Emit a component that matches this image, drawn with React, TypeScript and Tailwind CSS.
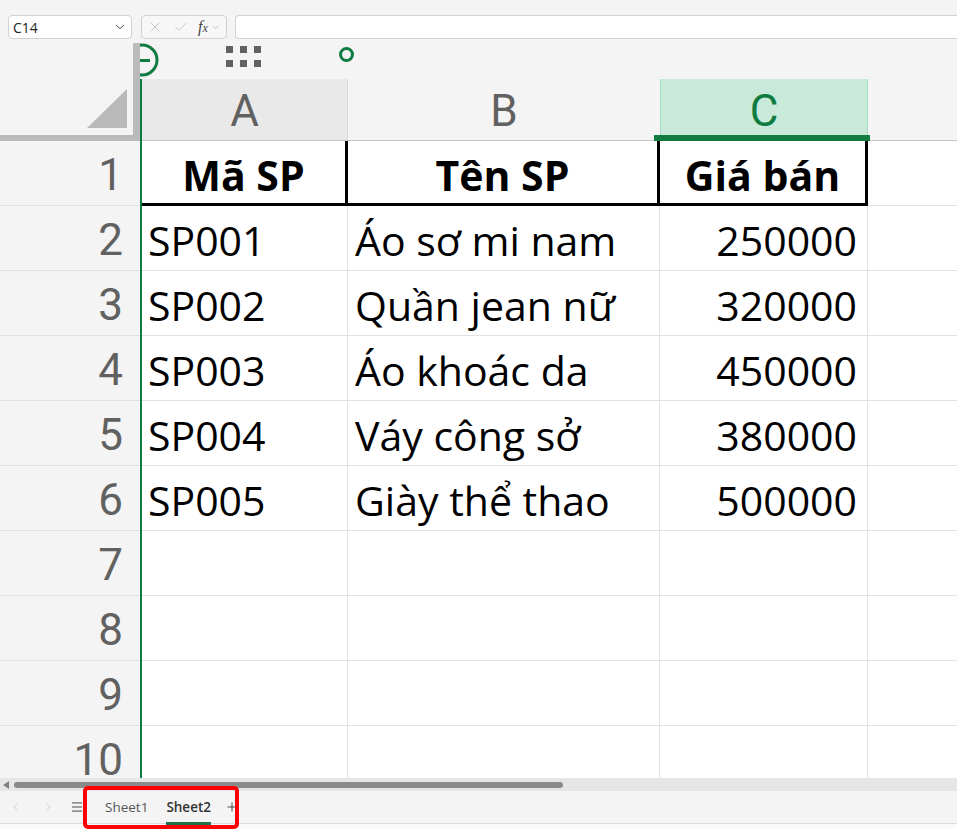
import { X, Check, ChevronDown, ChevronLeft, ChevronRight, Menu, Plus } from "lucide-react";

type Row = { n: number; a?: string; b?: string; c?: string; head?: boolean };

const ROWS: Row[] = [
  { n: 1, a: "Mã SP", b: "Tên SP", c: "Giá bán", head: true },
  { n: 2, a: "SP001", b: "Áo sơ mi nam", c: "250000" },
  { n: 3, a: "SP002", b: "Quần jean nữ", c: "320000" },
  { n: 4, a: "SP003", b: "Áo khoác da", c: "450000" },
  { n: 5, a: "SP004", b: "Váy công sở", c: "380000" },
  { n: 6, a: "SP005", b: "Giày thể thao", c: "500000" },
  { n: 7 },
  { n: 8 },
  { n: 9 },
  { n: 10 },
];

const cellFont = "font-['Open_Sans',sans-serif] text-[41px] leading-none text-black";
const headFont = "font-['Roboto',sans-serif] text-[44px] leading-none";

function TopBar() {
  return (
    <div className="flex h-[43px] items-start pt-[15px] font-['Open_Sans',sans-serif]">
      <div className="ml-[8px] flex h-[24px] w-[124px] items-center justify-between rounded-[4px] border border-[#d1d1d1] bg-white pl-[4px] pr-[4px] text-[14px] text-[#222]">
        <span>C14</span>
        <ChevronDown className="h-[14px] w-[14px] text-[#333]" strokeWidth={1.6} />
      </div>
      <div className="ml-[9px] flex h-[24px] w-[86px] items-center rounded-[4px] border border-[#d1d1d1] bg-[#f7f7f7] pl-[5px]">
        <X className="h-[16px] w-[16px] text-[#c3c3c3]" strokeWidth={1.4} />
        <Check className="ml-[10px] h-[16px] w-[16px] text-[#c3c3c3]" strokeWidth={1.4} />
        <span className="ml-[9px] font-['Liberation_Serif',serif] text-[16px] italic leading-none text-[#444]">
          f<span className="text-[12px]">x</span>
        </span>
        <ChevronDown className="ml-[3px] h-[9px] w-[9px] text-[#999]" strokeWidth={1.6} />
      </div>
      <div className="ml-[8px] h-[24px] flex-1 rounded-l-[4px] border border-r-0 border-[#d1d1d1] bg-white" />
    </div>
  );
}

function LeftPanel() {
  return (
    <div className="flex w-[140px] flex-col">
      <div className="flex h-[92px]">
        <div className="flex flex-1 items-end justify-end pb-[7px] pr-[6px]">
          <svg width="40" height="39" viewBox="0 0 40 39">
            <polygon points="40,0 40,39 0,39" fill="#b9b9b9" />
          </svg>
        </div>
        <div className="w-[7px] bg-[#bababa]" />
      </div>
      <div className="h-[6px] bg-[#bababa]" />
      <div className="h-[637px] overflow-hidden">
        {ROWS.map((r) => (
          <div
            key={r.n}
            className={`flex h-[65px] shrink-0 justify-end border-b border-[#e1e1e1] pr-[17px] pt-[12px] text-[#616161] ${headFont}`}
          >
            {r.n}
          </div>
        ))}
      </div>
    </div>
  );
}

function OutlineStrip() {
  return (
    <div className="relative flex h-[36px] items-start overflow-hidden">
      <svg className="absolute left-[-15px] top-0" width="34" height="34" viewBox="0 0 34 34">
        <circle cx="17" cy="17" r="15" fill="none" stroke="#107c41" strokeWidth="3" />
        <line x1="9" y1="17.5" x2="25" y2="17.5" stroke="#107c41" strokeWidth="3" />
      </svg>
      <div className="ml-[86px] mt-[3px] grid grid-cols-3 gap-[7px]">
        {Array.from({ length: 6 }).map((_, i) => (
          <div key={i} className="h-[7px] w-[7px] bg-[#616161]" />
        ))}
      </div>
      <div className="ml-[78px] mt-[4px] h-[15px] w-[15px] rounded-full border-[3px] border-[#107c41]" />
    </div>
  );
}

function ColumnHeaders() {
  return (
    <div className={`flex h-[62px] border-b border-[#c6c6c6] ${headFont}`}>
      <div className="flex w-[206px] justify-center border-r border-[#d9d9d9] bg-[#e9e9e9] pt-[10px] text-[#616161]">
        A
      </div>
      <div className="flex w-[312px] justify-center pt-[10px] text-[#616161]">B</div>
      <div className="relative flex w-[208px] justify-center border-x border-[#a9dbbd] bg-[#c9eada] pt-[10px] text-[#107c41]">
        C
        <div className="absolute bottom-[-1px] left-[-7px] right-[-3px] h-[6px] bg-[#107c41]" />
      </div>
      <div className="flex-1" />
    </div>
  );
}

function DataRows() {
  return (
    <div className="h-[637px] overflow-hidden">
      {ROWS.map((r) => {
        const b = r.head ? "border-b-[3px] border-black" : "border-b border-[#e1e1e1]";
        const rb = r.head ? "border-r-[3px] border-r-black" : "border-r border-r-[#e1e1e1]";
        const weight = r.head ? "font-bold" : "";
        return (
          <div key={r.n} className={`flex h-[65px] ${cellFont} ${weight}`}>
            <div className={`flex w-[206px] pt-[14px] ${b} ${rb} ${r.head ? "justify-center" : "pl-[6px]"}`}>
              {r.a}
            </div>
            <div className={`flex w-[312px] pt-[14px] ${b} ${rb} ${r.head ? "justify-center" : "pl-[7px]"}`}>
              {r.b}
            </div>
            <div className={`flex w-[208px] pt-[14px] ${b} ${rb} ${r.head ? "justify-center" : "justify-end pr-[10px]"}`}>
              {r.c}
            </div>
            <div className="flex-1 border-b border-[#e1e1e1]" />
          </div>
        );
      })}
    </div>
  );
}

function SheetBar() {
  return (
    <div className="font-['Open_Sans',sans-serif]">
      <div className="flex h-[13px] items-center bg-[#e6e6e6]">
        <svg className="ml-[3px]" width="6" height="8" viewBox="0 0 6 8">
          <polygon points="6,0 6,8 0,4" fill="#808080" />
        </svg>
        <div className="ml-[5px] h-[6px] w-[549px] rounded-full bg-[#8a8a8a]" />
      </div>
      <div className="flex h-[33px] items-center border-b border-[#dcdcdc] bg-[#f4f4f4] text-[13.5px]">
        <ChevronLeft className="ml-[9px] h-[14px] w-[14px] text-[#c4c4c4]" strokeWidth={1.4} />
        <ChevronRight className="ml-[18px] h-[14px] w-[14px] text-[#c4c4c4]" strokeWidth={1.4} />
        <Menu className="ml-[15px] h-[14px] w-[14px] text-[#333]" strokeWidth={1.5} />
        <span className="ml-[21px] text-[#555]">Sheet1</span>
        <span className="relative ml-[18px] font-semibold text-[#333]">
          Sheet2
          <span className="absolute bottom-[-8px] left-0 right-0 h-[3px] bg-[#1e7145]" />
        </span>
        <Plus className="ml-[14px] h-[14px] w-[14px] text-[#333]" strokeWidth={1.5} />
      </div>
      <div className="h-[5px] bg-[#fafafa]" />
    </div>
  );
}

export default function App() {
  return (
    <div className="relative flex h-[829px] w-[957px] flex-col overflow-hidden bg-[#f4f4f4]">
      <TopBar />
      <div className="flex h-[735px] bg-white">
        <div className="bg-[#f4f4f4]">
          <LeftPanel />
        </div>
        <div className="flex flex-1 flex-col">
          <div className="bg-[#f4f4f4]">
            <OutlineStrip />
          </div>
          <div className="flex-1 border-l-2 border-[#107c41]">
            <div className="bg-[#f4f4f4]">
              <ColumnHeaders />
            </div>
            <DataRows />
          </div>
        </div>
      </div>
      <SheetBar />
      <div className="pointer-events-none absolute left-[83px] top-[786px] h-[43px] w-[156px] rounded-[5px] border-4 border-[#ff0000]" />
    </div>
  );
}
